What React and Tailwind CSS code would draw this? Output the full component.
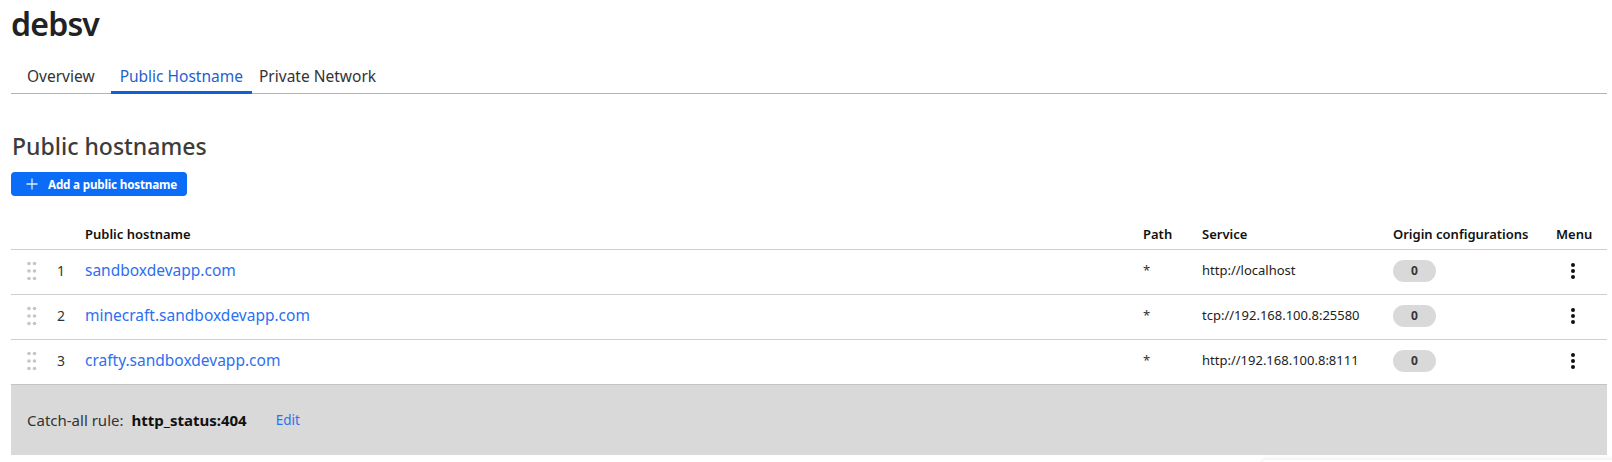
import React from "react";

const rows = [
  { n: 1, host: "sandboxdevapp.com", path: "*", service: "http://localhost" },
  { n: 2, host: "minecraft.sandboxdevapp.com", path: "*", service: "tcp://192.168.100.8:25580" },
  { n: 3, host: "crafty.sandboxdevapp.com", path: "*", service: "http://192.168.100.8:8111" },
];

function DragHandle() {
  return (
    <svg width="12" height="20" viewBox="0 0 12 20" className="block">
      {[2.5, 10, 17.5].map((y) => (
        <g key={y}>
          <circle cx="2" cy={y} r="1.8" fill="#c6c6c6" />
          <circle cx="7.5" cy={y} r="1.8" fill="#c6c6c6" />
        </g>
      ))}
    </svg>
  );
}

function MenuDots() {
  return (
    <svg width="4" height="16" viewBox="0 0 4 16" className="block">
      <circle cx="2" cy="2" r="2" fill="#111" />
      <circle cx="2" cy="8" r="2" fill="#111" />
      <circle cx="2" cy="14" r="2" fill="#111" />
    </svg>
  );
}

export default function App() {
  return (
    <div
      className="relative w-full h-[462px] overflow-hidden bg-white pl-[11px] pr-[5px] text-[#222]"
      style={{ fontFamily: '"Noto Sans", "Open Sans", sans-serif' }}
    >
      <h1 className="pt-[4px] text-[32px] leading-[40px] font-semibold text-[#222] tracking-[-0.8px]">debsv</h1>

      <div className="mt-[22px] flex border-b border-[#b3b3b3] text-[15.5px] leading-[20px]">
        <div className="pl-[16px] pr-[16px] pb-[5px] border-b-[3px] border-transparent -mb-px text-[#333]">Overview</div>
        <div className="px-[9px] pb-[5px] border-b-[3px] border-[#0f5fd6] -mb-px text-[#1f5fd0]">Public Hostname</div>
        <div className="px-[7px] pb-[5px] border-b-[3px] border-transparent -mb-px text-[#333]">Private Network</div>
      </div>

      <h2 className="mt-[36px] text-[23px] leading-[32px] font-medium text-[#3c3c3c] pl-px">Public hostnames</h2>

      <button className="mt-[10px] flex items-center h-[24px] w-[176px] rounded-[4px] bg-[#0a6cf7] pl-[15px] text-white">
        <svg width="12" height="12" viewBox="0 0 12 12" className="block">
          <path d="M6 0.5V11.5M0.5 6H11.5" stroke="#dfe9ff" strokeWidth="1.3" />
        </svg>
        <span className="ml-[10px] text-[11.7px] font-bold leading-[16px] tracking-[-0.2px]">Add a public hostname</span>
      </button>

      <div className="mt-[25px]">
        <div className="flex items-center h-[29px] border-b border-[#cfcfcf] text-[13px] font-semibold text-[#111]">
          <div className="w-[74px]" />
          <div className="flex-1">Public hostname</div>
          <div className="w-[59px]">Path</div>
          <div className="w-[191px]">Service</div>
          <div className="w-[163px]">Origin configurations</div>
          <div className="w-[51px]">Menu</div>
        </div>

        {rows.map((r, i) => (
          <div
            key={r.n}
            className={
              i < 2
                ? "flex items-center h-[45px] pb-[3px] border-b border-[#cfcfcf]"
                : "flex items-center h-[45px] pb-[3px] border-b border-[#c4c4c4]"
            }
          >
            <div className="w-[40px] pl-[16px]">
              <DragHandle />
            </div>
            <div className="w-[34px] pl-[6px] text-[14px] text-[#333]">{r.n}</div>
            <div className="flex-1 text-[15.5px] text-[#2c6ff0]">{r.host}</div>
            <div className="w-[59px] text-[13px] text-[#333]">{r.path}</div>
            <div className="w-[191px] text-[13px] text-[#222]">{r.service}</div>
            <div className="w-[163px]">
              <div className="flex items-center justify-center w-[43px] h-[22px] rounded-full bg-[#d9d9d9] text-[12px] font-bold text-[#333]">
                0
              </div>
            </div>
            <div className="w-[51px] pl-[15px]">
              <MenuDots />
            </div>
          </div>
        ))}

        <div className="flex items-center h-[70px] bg-[#d9d9d9] pl-[16px] text-[15px]">
          <span className="text-[#333]">Catch-all rule:</span>
          <span className="ml-[8px] font-bold text-[#111]">http_status:404</span>
          <span className="ml-[29px] text-[13.5px] text-[#2c6ff0]">Edit</span>
        </div>
      </div>

      <div className="absolute left-[1262px] top-[460px] w-[360px] h-[20px] rounded-[4px] bg-white shadow-[0_-1px_4px_rgba(0,0,0,0.08)]" />
    </div>
  );
}
